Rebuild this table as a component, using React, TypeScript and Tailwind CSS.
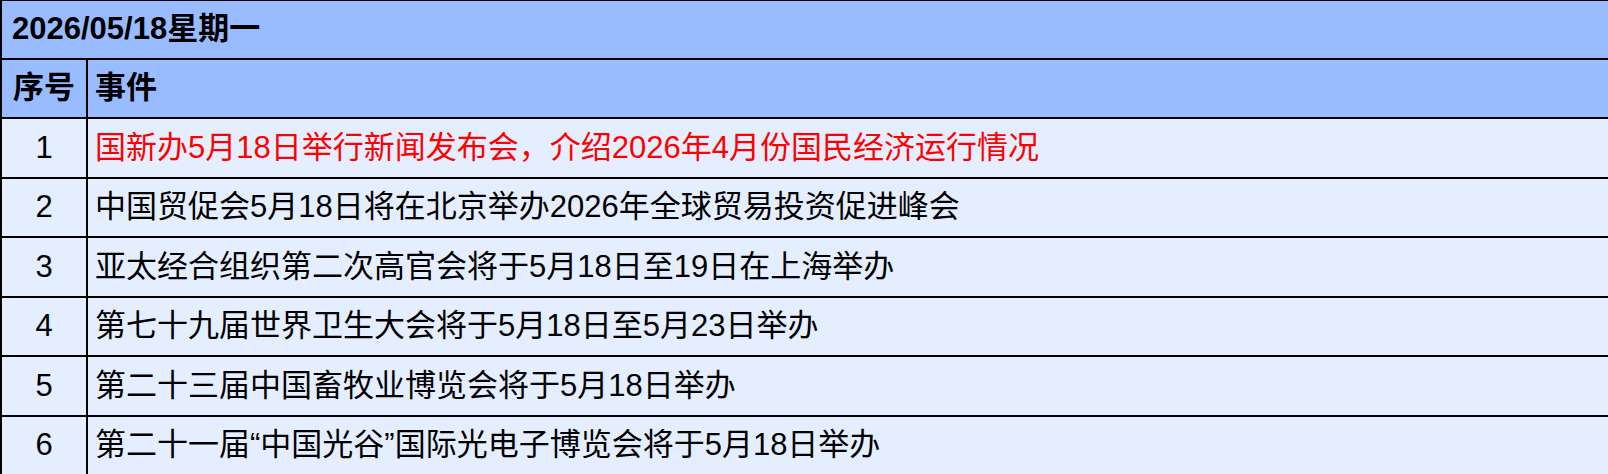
const events = [
  { no: 1, text: "国新办5月18日举行新闻发布会，介绍2026年4月份国民经济运行情况", hot: true },
  { no: 2, text: "中国贸促会5月18日将在北京举办2026年全球贸易投资促进峰会" },
  { no: 3, text: "亚太经合组织第二次高官会将于5月18日至19日在上海举办" },
  { no: 4, text: "第七十九届世界卫生大会将于5月18日至5月23日举办" },
  { no: 5, text: "第二十三届中国畜牧业博览会将于5月18日举办" },
  { no: 6, text: "第二十一届“中国光谷”国际光电子博览会将于5月18日举办" },
];

const font = { fontFamily: '"Liberation Sans", "Noto Sans CJK SC", sans-serif' };

export default function App() {
  return (
    <div className="w-[1608px] h-[474px] overflow-hidden bg-[#e5eeff]" style={font}>
      <div className="border-l-2 border-t border-black">
        <div className="flex h-[58.5px] items-center border-b-2 border-black bg-[#99bbff] pl-[10px] text-[31px] font-bold text-black">
          2026/05/18星期一
        </div>
        <div className="flex h-[59.5px] border-b-2 border-black bg-[#99bbff] text-[31px] font-bold text-black">
          <div className="flex w-[86px] shrink-0 items-center justify-center border-r-2 border-black">序号</div>
          <div className="flex items-center pl-[7px]">事件</div>
        </div>
        {events.map((e, i) => (
          <div
            key={e.no}
            className={
              "flex h-[59.5px] border-b-2 text-[31px] " +
              (i === events.length - 1 ? "border-[#a3a8b0]" : "border-black")
            }
          >
            <div className="flex w-[86px] shrink-0 items-center justify-center border-r-2 border-black text-black">
              {e.no}
            </div>
            <div className={"flex items-center pl-[7px] " + (e.hot ? "text-[#ff0000]" : "text-black")}>
              {e.text}
            </div>
          </div>
        ))}
      </div>
    </div>
  );
}
